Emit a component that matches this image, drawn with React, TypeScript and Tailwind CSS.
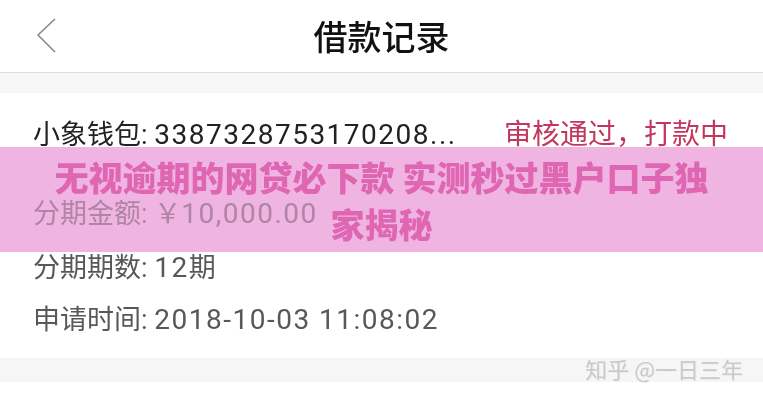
import React from "react";

const F = "font-['Roboto','Noto_Sans_CJK_SC',sans-serif]";

function Num({ children }: { children: React.ReactNode }) {
  return <span className="text-[28px] tracking-[1.5px]">{children}</span>;
}

export default function App() {
  return (
    <div className={`relative w-[763px] h-[400px] overflow-hidden bg-white ${F}`}>
      {/* header */}
      <div className="grid grid-cols-[1fr_auto_1fr] items-center h-[73px] border-b border-[#dedede]">
        <div className="pl-[36px] flex items-center">
          <svg width="22" height="36" viewBox="0 0 22 36" fill="none">
            <polyline points="19,1 2,17 19,34" stroke="#8a8a8a" strokeWidth="1.6" fill="none" />
          </svg>
        </div>
        <div className="text-[34px] leading-none font-medium text-[#111] font-['Noto_Sans_CJK_SC',sans-serif]">
          借款记录
        </div>
        <div />
      </div>
      <div className="h-[20px] bg-[#f6f6f6]" />

      {/* content */}
      <div className="px-[33px] pt-[22px] pb-[18px]">
        <div className="flex items-center justify-between h-[40px]">
          <div className="text-[27px] leading-[40px] text-[#222]">
            小象钱包: <Num>3387328753170208...</Num>
          </div>
          <div className="text-[28px] leading-[40px] text-[#c2375e] pr-[2px]">审核通过，打款中</div>
        </div>
        <div className="mt-[39px] h-[40px] text-[27px] leading-[40px] text-[#bbbbbb]">
          分期金额: ￥<Num>10,000.00</Num>
        </div>
        <div className="mt-[14px] h-[40px] text-[27px] leading-[40px] text-[#585858]">
          分期期数: <Num>12</Num>期
        </div>
        <div className="mt-[12px] h-[40px] text-[27px] leading-[40px] text-[#585858]">
          申请时间: <Num>2018-10-03 11:08:02</Num>
        </div>
      </div>
      <div className="h-[24px] bg-[#f6f6f6]" />

      {/* pink banner overlay */}
      <div className="absolute left-0 right-0 top-[147px] h-[105px] flex items-center justify-center bg-[#f0b4e2] mix-blend-multiply">
        <div className="text-center text-[34px] leading-[47px] font-black text-[#df66b2] font-['Noto_Sans_CJK_SC',sans-serif]">
          无视逾期的网贷必下款 实测秒过黑户口子独
          <br />
          家揭秘
        </div>
      </div>

      {/* watermark */}
      <div className="absolute right-[20px] top-[354px] text-[22px] leading-[28px] text-[#c9c9c9] font-['Noto_Sans_CJK_SC',sans-serif] [text-shadow:1px_1px_0_#eeeeee]">
        知乎 @一日三年
      </div>
    </div>
  );
}
